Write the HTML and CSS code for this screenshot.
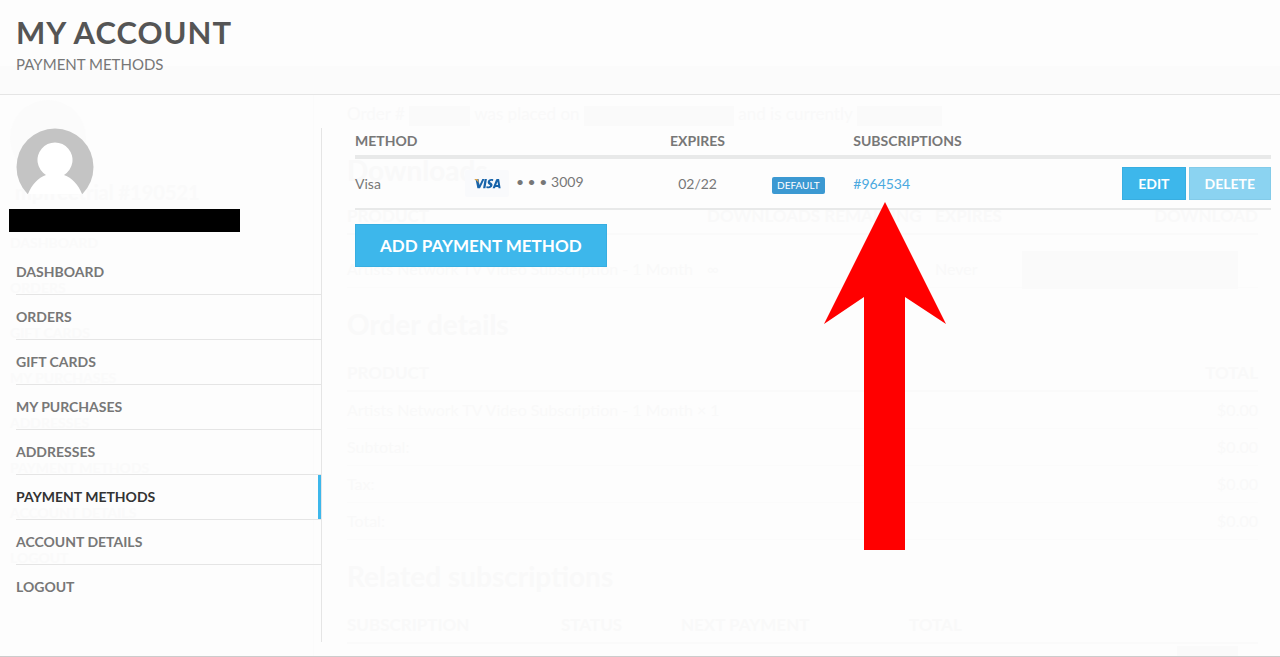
FILE: index.html
```html
<!DOCTYPE html>
<html lang="en">
<head>
<meta charset="utf-8">
<meta name="viewport" content="width=device-width, initial-scale=1">
<title>My account – Payment methods</title>
<link rel="stylesheet" href="styles.css">
</head>
<body>
<div class="page">
  <header class="page-header">
    <h1 class="page-title">MY ACCOUNT</h1>
    <p class="page-subtitle">PAYMENT METHODS</p>
  </header>

  <div class="faded" aria-hidden="true">
    <div class="faded-side">
      <div class="faded-avatar"></div>
      <p class="faded-user">mpfreetrial #190521</p>
      <p>DASHBOARD</p><p>ORDERS</p><p>GIFT CARDS</p><p>MY PURCHASES</p><p>ADDRESSES</p><p>PAYMENT METHODS</p><p>ACCOUNT DETAILS</p><p>LOGOUT</p>
    </div>
    <div class="faded-main">
      <p class="faded-intro">Order # <span class="mask mask-s"></span> was placed on <span class="mask mask-l"></span> and is currently <span class="mask mask-m"></span></p>
      <h2>Downloads</h2>
      <div class="faded-row faded-head faded-downloads"><span>PRODUCT</span><span>DOWNLOADS REMAINING</span><span>EXPIRES</span><span>DOWNLOAD</span></div>
      <div class="faded-row faded-item faded-downloads"><span>Artists Network TV Video Subscription - 1 Month</span><span>∞</span><span>Never</span><span class="mask mask-button"></span></div>
      <h2>Order details</h2>
      <div class="faded-row faded-head"><span>PRODUCT</span><span>TOTAL</span></div>
      <div class="faded-row"><span>Artists Network TV Video Subscription - 1 Month × 1</span><span>$0.00</span></div>
      <div class="faded-row"><span>Subtotal:</span><span>$0.00</span></div>
      <div class="faded-row"><span>Tax:</span><span>$0.00</span></div>
      <div class="faded-row"><span>Total:</span><span>$0.00</span></div>
      <h2>Related subscriptions</h2>
      <div class="faded-row faded-head faded-related"><span>SUBSCRIPTION</span><span>STATUS</span><span>NEXT PAYMENT</span><span>TOTAL</span></div>
      <div class="faded-foot"><span class="mask mask-s"></span></div>
    </div>
  </div>

  <div class="content">
    <aside class="sidebar">
      <div class="user">
        <svg class="avatar" viewBox="0 0 78 78" role="img" aria-label="User avatar">
          <defs><clipPath id="round"><path d="M0 0H78V66H0Z"/></clipPath></defs>
          <g clip-path="url(#round)">
            <circle cx="39" cy="39" r="38.5" fill="#c4c4c4"/>
            <path d="M12 66C16 56 22 50 30 47A17.500 17.500 0 1 1 48 47C56 50 62 56 66 66L60 78H18Z" fill="#fff"/>
          </g>
        </svg>
        <div class="redaction"></div>
      </div>
      <nav aria-label="Account">
        <ul class="menu">
          <li><a href="#dashboard">DASHBOARD</a></li>
          <li><a href="#orders">ORDERS</a></li>
          <li><a href="#gift-cards">GIFT CARDS</a></li>
          <li><a href="#purchases">MY PURCHASES</a></li>
          <li><a href="#addresses">ADDRESSES</a></li>
          <li class="active"><a href="#payment-methods" aria-current="page">PAYMENT METHODS</a></li>
          <li><a href="#details">ACCOUNT DETAILS</a></li>
          <li><a href="#logout">LOGOUT</a></li>
        </ul>
      </nav>
    </aside>

    <main class="main">
      <table class="methods">
        <colgroup><col class="col-name"><col class="col-card"><col class="col-expires"><col class="col-default"><col class="col-subs"><col></colgroup>
        <thead>
          <tr><th colspan="2">METHOD</th><th class="center">EXPIRES</th><td></td><th>SUBSCRIPTIONS</th><td></td></tr>
        </thead>
        <tbody>
          <tr>
            <td>Visa</td>
            <td>
              <div class="card">
                <svg class="visa" viewBox="0 0 44 27" role="img" aria-label="Visa">
                  <rect width="44" height="27" rx="2" fill="#f9fafc"/>
                  <g fill="#1763a9">
                    <path d="M10 9H13.500L14.500 15 17.300 9H19.500L15 18.200H12.400L10.800 10.500Z"/>
                    <path d="M19.600 9H21.900L20.400 18.200H18.100Z"/>
                    <path d="M28.300 9.300L27.900 11.200C26.900 10.700 25.200 10.600 25 11.400 24.900 12.500 27.700 12.500 27.500 15.100 27.300 17.900 24.400 18.800 21.300 17.900L21.700 15.900C23.100 16.600 24.900 16.700 25.100 15.600 25.200 14.500 22.500 14.400 22.700 11.900 22.900 9.100 26 8.300 28.300 9.300Z"/>
                    <path fill-rule="evenodd" d="M32 9H34.100L35.600 18.200H33.500L33.300 16.900H30.500L29.900 18.200H27.600L31 9.700Q31.300 9 32 9ZM32.500 11.700L31.200 15H33Z"/>
                  </g>
                  <path d="M9 9H11.900Q12.900 9 13.100 10L13.700 13Q12.500 10.300 9 9Z" fill="#e5a647"/>
                </svg>
                <span class="digits">• • • 3009</span>
              </div>
            </td>
            <td class="center">02/22</td>
            <td class="center"><span class="badge">DEFAULT</span></td>
            <td><a class="link" href="#964534">#964534</a></td>
            <td><div class="actions"><button class="button" type="button">EDIT</button><button class="button light" type="button">DELETE</button></div></td>
          </tr>
        </tbody>
      </table>
      <button class="button large" type="button">ADD PAYMENT METHOD</button>
    </main>
  </div>

  <svg class="pointer" viewBox="0 0 124 349" aria-hidden="true">
    <path d="M62 0L123 122 82 95V348H41V95L1 122Z" fill="#f00"/>
  </svg>
</div>
</body>
</html>
```
FILE: styles.css
```css
* { box-sizing: border-box; }
body {
  margin: 0;
  background: #fdfdfd;
  color: #777;
  font-family: Lato, "Open Sans", sans-serif;
  font-size: 14px;
  line-height: 20px;
}
h1, h2, p { margin: 0; }
.page {
  position: relative;
  min-height: 100vh;
  overflow: hidden;
  border-bottom: 1px solid #ccc;
}
.page-header {
  padding: 12px 16px 17px;
  border-bottom: 1px solid #e5e5e5;
  background: linear-gradient(#fdfdfd 66px, #fbfbfb 66px);
}
.page-title {
  color: #555;
  font-size: 31px;
  line-height: 40px;
  font-weight: 700;
  letter-spacing: 1px;
}
.page-subtitle { font-size: 15px; line-height: 25px; }

.content {
  position: relative;
  display: grid;
  grid-template-columns: 306px 1fr;
  column-gap: 33px;
  padding: 33px 9px 14px 16px;
}
.sidebar {
  min-height: 514px;
  border-right: 1px solid #e5e5e5;
}
.user { margin-bottom: 17px; }
.avatar { display: block; width: 78px; height: 78px; }
.redaction {
  width: 231px;
  height: 23px;
  margin: 3px 0 0 -7px;
  background: #000;
}
.menu { margin: 0; padding: 0; list-style: none; }
.menu li { border-top: 1px solid #e5e5e5; }
.menu li:first-child { border-top-color: transparent; }
.menu a {
  display: block;
  padding: 12px 0;
  color: #777;
  font-size: 14px;
  font-weight: 700;
  text-decoration: none;
}
.menu .active a { color: #333; border-right: 3px solid #3db7eb; }

.methods {
  width: 100%;
  margin-bottom: 14px;
  border-collapse: separate;
  border-spacing: 0;
  table-layout: fixed;
}
.methods th, .methods td { padding: 0; text-align: left; }
.methods thead th, .methods thead td {
  height: 31px;
  padding: 3px 0 4px;
  border-bottom: 4px solid #e8e9e9;
  font-weight: 700;
}
.methods tbody td { height: 51px; border-bottom: 2px solid #e8e9e9; }
.methods .center { text-align: center; }
.col-name { width: 12%; }
.col-card { width: 20.4%; }
.col-expires { width: 10%; }
.col-default { width: 12%; }
.col-subs { width: 16%; }
.card { display: flex; align-items: center; gap: 7px; }
.visa { width: 44px; height: 27px; }
.digits { padding-bottom: 3px; }
.badge {
  display: inline-block;
  padding: 0 5px;
  border-radius: 2px;
  background: #3c99d2;
  color: #fff;
  font-size: 10px;
  line-height: 17px;
}
.link { color: #4ba9df; text-decoration: none; }
.actions { display: flex; justify-content: flex-end; gap: 3px; }
.button {
  padding: 0 15px;
  border: 1px solid #38aee1;
  border-radius: 0;
  background: #3db7eb;
  color: #fff;
  font: 700 14px/31px Lato, "Open Sans", sans-serif;
}
.button.light { background: #8bd3f1; border-color: #83cbe9; }
.button.large { padding: 0 24px; font-size: 17px; line-height: 41px; }

.pointer {
  position: absolute;
  top: 202px;
  left: 823px;
  width: 124px;
  height: 349px;
}

/* Dimmed order page behind the account panel */
.faded {
  position: absolute;
  inset: 95px 0 0 0;
  display: grid;
  grid-template-columns: 314px 1fr;
  color: #f9f9f9;
  overflow: hidden;
}
.faded-side { padding: 5px 0 0 10px; border-right: 1px solid #fbfbfb; color: #fafafa; font-weight: 700; }
.faded-side p { line-height: 45px; }
.faded-side .faded-user { padding-left: 5px; font-size: 20px; line-height: 32px; margin-bottom: 12px; }
.faded-avatar { width: 76px; height: 76px; border-radius: 50%; background: #fbfbfb; }
.faded-main { padding: 6px 22px 0 33px; font-size: 16px; }
.faded h2 { font-size: 28px; line-height: 40px; padding: 16px 0 11px; }
.faded-intro { font-size: 17px; line-height: 26px; height: 26px; white-space: nowrap; }
.faded-main .faded-intro + h2 { padding: 23px 0 8px; }
.mask { display: inline-block; height: 20px; background: #fafafa; vertical-align: middle; }
.mask-s { width: 61px; }
.mask-l { width: 150px; }
.mask-m { width: 85px; }
.mask-button { width: 216px; height: 38px; margin-right: 20px; }
.faded-row { display: flex; justify-content: space-between; line-height: 36px; border-bottom: 1px solid #fbfbfb; }
.faded-head { font-size: 17px; font-weight: 700; line-height: 35px; border-bottom: 2px solid #fafafa; }
.faded-downloads { display: grid; grid-template-columns: 360px 228px 1fr auto; white-space: nowrap; }
.faded-item { padding-top: 16px; height: 53px; }
.faded-related { display: grid; grid-template-columns: 214px 120px 228px 1fr; }
.faded-foot { text-align: right; padding-right: 20px; }
```
